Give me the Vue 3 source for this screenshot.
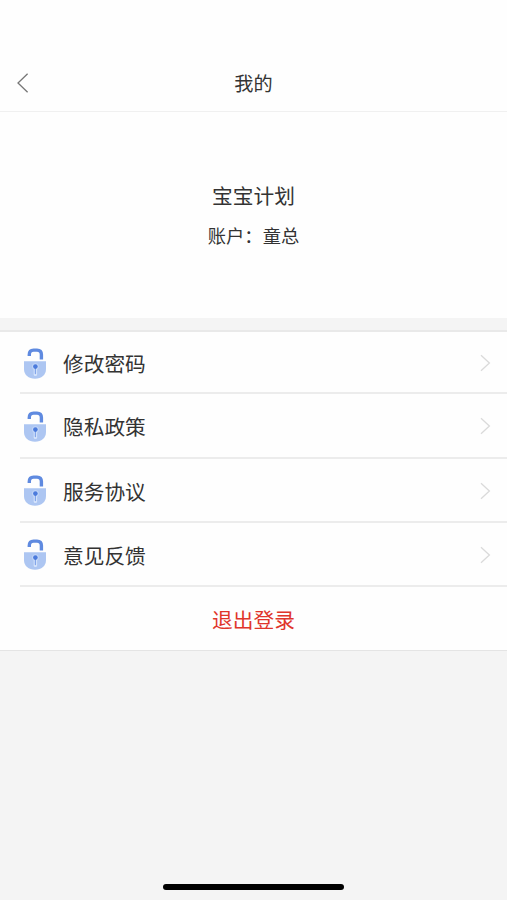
<script setup>
import { ref } from 'vue'

const title = ref('我的')
const plan = ref('宝宝计划')
const account = ref('童总')

const menus = [
	{ key: 'password', label: '修改密码' },
	{ key: 'privacy', label: '隐私政策' },
	{ key: 'service', label: '服务协议' },
	{ key: 'feedback', label: '意见反馈' }
]
</script>

<template>
	<div class="page">
		<header class="nav">
			<svg class="back" viewBox="0 0 12 20" width="12" height="20">
				<path d="M10.6 0.8 1 10 10.6 19.2" fill="none" stroke="#777" stroke-width="1.3" />
			</svg>
			<h1 class="nav-title">{{ title }}</h1>
		</header>

		<section class="profile">
			<div class="plan">{{ plan }}</div>
			<div class="account">账户：{{ account }}</div>
		</section>

		<ul class="menu">
			<li v-for="m in menus" :key="m.key" class="item">
				<svg class="lock" viewBox="0 0 22 31" width="22" height="31">
					<path d="M5.3 8V6.4Q5.3 2.1 9.6 2.1H13Q17.4 2.1 17.4 6.4V11.4" fill="none" stroke="#5f8ae0" stroke-width="3.4" />
					<path d="M0 13.3H22V21C22 27 17.5 30.7 11 30.7S0 27 0 21Z" fill="#adc6f2" />
					<circle cx="11.4" cy="18.6" r="3.3" fill="#c3d7f8" />
					<path d="M11.4 20V26.4" stroke="#d6e4fb" stroke-width="3.4" stroke-linecap="round" />
					<path d="M11.4 19V25.6" stroke="#83a6ea" stroke-width="1.3" stroke-linecap="round" />
					<circle cx="11.4" cy="18.6" r="2.3" fill="#4c7bdc" />
				</svg>
				<span class="label">{{ m.label }}</span>
				<svg class="arrow" viewBox="0 0 11 18" width="11" height="18">
					<path d="M1 1.2 9.4 9 1 16.8" fill="none" stroke="#dadada" stroke-width="1.3" />
				</svg>
			</li>
			<li class="logout">退出登录</li>
		</ul>

		<footer class="bottom">
			<div class="home-bar"></div>
		</footer>
	</div>
</template>

<style>
body {
	background: #f4f4f4;
}
</style>

<style scoped>
.page {
	display: flex;
	flex-direction: column;
	height: 900px;
	overflow: hidden;
	box-sizing: border-box;
	background: #f4f4f4;
	color: #333;
	font-family: "Noto Sans CJK SC", "Liberation Sans", sans-serif;
}

/* 顶部导航 */
.nav {
	display: grid;
	grid-template-columns: 40px 1fr 40px;
	align-items: center;
	height: 112px;
	padding: 54px 0 0;
	box-sizing: border-box;
	border-bottom: 1px solid #f0f0f0;
	background: #fefefe;
}

.back {
	margin-left: 17px;
}

.nav-title {
	margin: 0;
	text-align: center;
	font-size: 19.2px;
	font-weight: 400;
	line-height: 28px;
}

.profile {
	height: 206px;
	padding-top: 68px;
	box-sizing: border-box;
	background: #fefefe;
	text-align: center;
}

.plan {
	font-size: 20.7px;
	line-height: 30px;
}

.account {
	margin-top: 11px;
	font-size: 18.3px;
	line-height: 28px;
}

.menu {
	margin: 12px 0 0;
	padding: 0;
	list-style: none;
	border-top: 2px solid #e9e9e9;
	border-bottom: 1px solid #e4e4e4;
	background: #fefefe;
}

.item {
	display: flex;
	align-items: center;
	height: 64.2px;
	box-sizing: border-box;
	margin-left: 20px;
	padding: 2px 16px 0 4px;
	border-bottom: 2px solid #ececec;
}

.item:first-child {
	height: 62.4px;
}

.label {
	flex: 1;
	margin-left: 17px;
	font-size: 20.7px;
	line-height: 30px;
}

.logout {
	height: 62.8px;
	line-height: 65px;
	text-align: center;
	font-size: 20.7px;
	color: #e0352b;
}

.bottom {
	display: flex;
	flex: 1;
	align-items: flex-end;
	justify-content: center;
	padding-bottom: 10px;
}

.home-bar {
	width: 181px;
	height: 6px;
	border-radius: 3px;
	background: #000;
}
</style>
